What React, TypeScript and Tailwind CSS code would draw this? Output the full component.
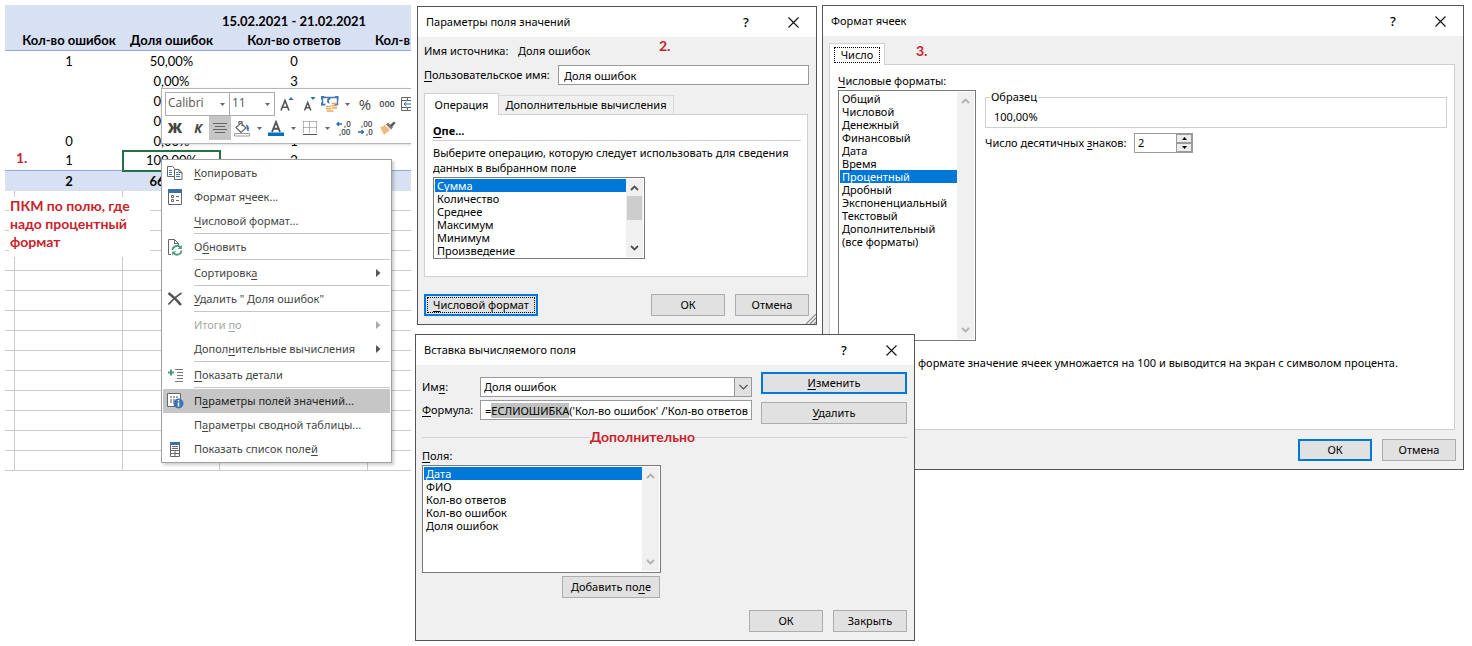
import { useEffect, useRef, type ReactNode } from "react";

const annotation = "font-[Lato,'Noto_Sans',sans-serif] text-[14px] font-bold text-[#c8232c]";

function Caption({ text, hot }: { text: string; hot: number }) {
  return (
    <>
      {text.slice(0, hot)}
      <span className="underline decoration-1 underline-offset-2">{text[hot]}</span>
      {text.slice(hot + 1)}
    </>
  );
}

/* ---------- Worksheet ---------- */

const rows: string[][] = [
  ["1", "50,00%", "0"],
  ["", "0,00%", "3"],
  ["", "0,00%", ""],
  ["", "0,00%", ""],
  ["0", "0,00%", "1"],
  ["1", "100,00%", "2"],
];

function Sheet() {
  return (
    <table className="w-full table-fixed border-separate border-spacing-0 text-center font-[Lato,'Noto_Sans',sans-serif] text-[13px] leading-[19px] text-black">
      <colgroup>
        <col className="w-[10px]" />
        <col className="w-[108px]" />
        <col className="w-[97px]" />
        <col className="w-[148px]" />
        <col />
      </colgroup>
      <thead className="bg-[#d8e0f4]">
        <tr className="h-[26px]">
          <th className="p-0" />
          <th className="p-0" />
          <th className="p-0" />
          <th className="whitespace-nowrap p-0 pt-[6px]">15.02.2021 - 21.02.2021</th>
          <th className="p-0" />
        </tr>
        <tr className="h-5 [&>th]:border-b [&>th]:border-[#8ea9db]">
          <th className="p-0" />
          <th className="whitespace-nowrap p-0">Кол-во ошибок</th>
          <th className="whitespace-nowrap p-0">Доля ошибок</th>
          <th className="whitespace-nowrap p-0">Кол-во ответов</th>
          <th className="overflow-hidden whitespace-nowrap p-0 pl-[7px] text-left">Кол-в</th>
        </tr>
      </thead>
      <tbody>
        {rows.map((r, i) => (
          <tr key={i} className={i === 5 ? "h-5 [&>td]:border-b [&>td]:border-[#8ea9db]" : "h-5"}>
            <td className="p-0" />
            <td className="p-0">{r[0]}</td>
            <td className={i === 5 ? "p-0 outline-2 -outline-offset-1 outline-[#217346]" : "p-0"}>{r[1]}</td>
            <td className="p-0">{r[2]}</td>
            <td className="p-0" />
          </tr>
        ))}
        <tr className="h-5 bg-[#d8e0f4] font-bold">
          <td className="p-0" />
          <td className="p-0">2</td>
          <td className="p-0">66,67%</td>
          <td className="p-0" />
          <td className="p-0" />
        </tr>
        {Array.from({ length: 14 }, (_, i) => (
          <tr key={i} className="h-5 [&>td]:border-b [&>td]:border-r [&>td]:border-[#c9ccc9] [&>td]:p-0 [&>td:last-child]:border-r-0">
            <td />
            <td />
            <td />
            <td />
            <td />
          </tr>
        ))}
      </tbody>
    </table>
  );
}

/* ---------- Mini toolbar ---------- */

function Drop() {
  return (
    <button aria-label="Ещё" className="flex h-6 w-3 items-center justify-center">
      <svg width="5" height="3" viewBox="0 0 5 3"><path d="M0 0h5L2.5 3z" fill="#666" /></svg>
    </button>
  );
}

function ToolSelect({ label, value, className }: { label: string; value: string; className: string }) {
  return (
    <div className={`relative h-6 border border-[#ababab] bg-white ${className}`}>
      <select aria-label={label} className="block h-5 w-full appearance-none bg-transparent pl-[2px] text-[12px] leading-5 text-[#555] outline-none">
        <option>{value}</option>
      </select>
      <svg className="pointer-events-none absolute right-1 top-[10px]" width="5" height="3" viewBox="0 0 5 3">
        <path d="M0 0h5L2.5 3z" fill="#666" />
      </svg>
    </div>
  );
}

function Tool({ label, className, children }: { label: string; className: string; children: ReactNode }) {
  return (
    <button aria-label={label} className={`flex h-6 shrink-0 items-center justify-center text-[#444] ${className}`}>
      {children}
    </button>
  );
}

function MiniToolbar() {
  return (
    <div className="absolute left-[156px] top-[83px] w-[300px] border border-[#b5b5b5] bg-white pb-[3px] pt-[3px] font-['Open_Sans','Noto_Sans',sans-serif] shadow-sm">
      <div className="flex pl-[3px]">
        <ToolSelect label="Шрифт" value="Calibri" className="w-[65px]" />
        <ToolSelect label="Размер шрифта" value="11" className="-ml-px w-[46px]" />
        <Tool label="Увеличить размер шрифта" className="w-6">
          <svg width="14" height="16" viewBox="0 0 14 16">
            <path d="M1 14.5 5 4.5l4 10M2.3 11.2h5.4" fill="none" stroke="#555" strokeWidth="1.6" />
            <path d="M8.500 4h5L11 1z" fill="#2b6cb0" />
          </svg>
        </Tool>
        <Tool label="Уменьшить размер шрифта" className="w-5">
          <svg width="13" height="16" viewBox="0 0 13 16">
            <path d="M1.500 14.500l3.200-8 3.200 8M2.600 11.800h4.300" fill="none" stroke="#555" strokeWidth="1.500" />
            <path d="M7.500 1h5L10 4z" fill="#2b6cb0" />
          </svg>
        </Tool>
        <Tool label="Финансовый числовой формат" className="w-[22px]">
          <svg width="18" height="16" viewBox="0 0 18 16">
            <path d="M1.500 1.500h15v7h-3M1.500 1.500v7h3" fill="none" stroke="#3f78b5" strokeWidth="1.400" />
            <path d="M0 0h4L0 4zM17.500 0h-4l4 4zM0 9.500V6l3.500 3.500z" fill="#3f78b5" />
            <path d="M9.500 2.500c-3 0-3.500 4-1 4" fill="none" stroke="#3f78b5" strokeWidth="1.800" />
            <path d="M10.500 7.500h5.500M10.500 9.700h5.500M10.500 12h5.500M5 10.500h5M5 12.700h5M6 15h6.500" stroke="#e9a860" strokeWidth="1.500" />
          </svg>
        </Tool>
        <Drop />
        <Tool label="Процентный формат" className="w-6"><span className="text-[15px] leading-5">%</span></Tool>
        <Tool label="Формат с разделителями" className="w-5"><span className="text-[9px] font-semibold leading-4">000</span></Tool>
        <Tool label="Объединить и поместить в центре" className="w-6">
          <svg width="18" height="16" viewBox="0 0 18 16" fill="none" stroke="#666">
            <path d="M1.500 1.500h16v13h-16zM1.500 4.500h16M1.500 11.500h16M7.500 1.500v3M7.500 11.500v3M13.500 1.500v3M13.500 11.500v3" />
            <path d="M4 8h10M6.500 5.800 4 8l2.500 2.200" stroke="#2b6cb0" />
          </svg>
        </Tool>
      </div>
      <div className="flex pl-px">
        <Tool label="Полужирный" className="w-6"><span className="text-[14px] font-extrabold leading-5">Ж</span></Tool>
        <Tool label="Курсив" className="w-[22px]"><span className="text-[13px] font-bold italic leading-5">К</span></Tool>
        <Tool label="По центру" className="w-[22px] bg-[#c6c6c6]">
          <svg width="16" height="14" viewBox="0 0 16 14" stroke="#666">
            <path d="M1 2.500h14M3 5.500h10M1 8.500h14M3 11.500h10" />
          </svg>
        </Tool>
        <Tool label="Цвет заливки" className="w-[22px]">
          <svg width="18" height="17" viewBox="0 0 18 17">
            <path d="M3 7.500 8 3l5 5-5 4.500zM6 5V1.500h3V6" fill="#fff" stroke="#666" strokeWidth="1.200" />
            <path d="M13 4.500c3 .5 3.500 4 2.500 7-1.500-1-2-2-2-4" fill="#3f78b5" />
            <path d="M1.500 13.500h15v2.500h-15z" fill="#fff" stroke="#999" />
          </svg>
        </Tool>
        <Drop />
        <Tool label="Цвет текста" className="w-[22px]">
          <svg width="16" height="17" viewBox="0 0 16 17">
            <path d="M4 12 8 2l4 10M5.300 8.800h5.400" fill="none" stroke="#555" strokeWidth="1.900" />
            <path d="M0 12.500h16v3.500H0z" fill="#0070c0" />
          </svg>
        </Tool>
        <Drop />
        <Tool label="Границы" className="w-[22px]">
          <svg width="14" height="14" viewBox="0 0 14 14" fill="none" stroke="#777">
            <path d="M.5.5h13M.5 6.500h13M.5.5v12M6.500.5v12M13.500.5v12" strokeDasharray="1 1" />
            <path d="M0 13.500h14" stroke="#555" />
          </svg>
        </Tool>
        <Drop />
        <Tool label="Увеличить разрядность" className="w-[22px]">
          <svg width="18" height="18" viewBox="0 0 18 18" fill="#444" fontSize="8" fontFamily="Open Sans, sans-serif" fontWeight="600">
            <path d="M2 5h5M4 3 2 5l2 2" fill="none" stroke="#2b6cb0" strokeWidth="1.300" />
            <text x="9" y="8">,0</text>
            <text x="4" y="16">,00</text>
          </svg>
        </Tool>
        <Tool label="Уменьшить разрядность" className="w-[22px]">
          <svg width="18" height="18" viewBox="0 0 18 18" fill="#444" fontSize="8" fontFamily="Open Sans, sans-serif" fontWeight="600">
            <text x="4" y="8">,00</text>
            <path d="M1 13h5.500M4.500 11l2 2-2 2" fill="none" stroke="#2b6cb0" strokeWidth="1.300" />
            <text x="9" y="16">,0</text>
          </svg>
        </Tool>
        <Tool label="Формат по образцу" className="w-[22px]">
          <svg width="18" height="16" viewBox="0 0 18 16">
            <path d="M1 7c2 0 3-1 5-2l5 5c-2 2-4 3-6 5z" fill="#eebb7d" />
            <path d="m7 4.500 5 5 2-2-5-5z" fill="#777" />
            <path d="m11 5 4-3.500 1.500 1.500L13 7z" fill="#555" />
          </svg>
        </Tool>
      </div>
    </div>
  );
}

/* ---------- Context menu ---------- */

const menuIcons: Record<string, ReactNode> = {
  copy: (
    <svg width="16" height="16" viewBox="0 0 16 16" fill="#fff" stroke="#666">
      <path d="M.5 1.500h5l2 2v8h-7z" />
      <path d="M2 5.500h3M2 7.500h3M2 9.500h3" stroke="#3f78b5" />
      <path d="M7.500 4.500h4.500l3 3v7h-7.500z" />
      <path d="M12 4.500v3h3" fill="none" />
      <path d="M9 9.500h4M9 11.500h4M9 7.500h2" stroke="#3f78b5" />
    </svg>
  ),
  format: (
    <svg width="14" height="16" viewBox="0 0 14 16" fill="none" stroke="#666">
      <path d="M.5.5h13v15H.5z" fill="#fff" />
      <path d="M0 2h14" stroke="#3d6ea5" strokeWidth="4" />
      <path d="M3.500 6.500h2v2h-2zM3.500 10.500h2v2h-2zM8 7.500h3M8 11.500h3" />
    </svg>
  ),
  refresh: (
    <svg width="16" height="17" viewBox="0 0 16 17" fill="none">
      <path d="M4 15.500H1.500V.5h6l4 4V6" stroke="#666" />
      <path d="M7.500.5v4h4" stroke="#666" />
      <path d="M5.500 11a4.500 4.500 0 0 1 8-2.500M14.500 11.500a4.500 4.500 0 0 1-8 2.500" stroke="#4d9a7c" strokeWidth="1.800" />
      <path d="M14.800 6v4h-4zM5.200 16.500v-4h4z" fill="#4d9a7c" />
    </svg>
  ),
  remove: (
    <svg width="16" height="14" viewBox="0 0 16 14" fill="none" stroke="#555">
      <path d="M1.500 1C6 4.500 10 8 14 13" strokeWidth="2.600" />
      <path d="M14.500 1C9.500 4 5 8 1.500 12.500" strokeWidth="1.700" />
    </svg>
  ),
  details: (
    <svg width="15" height="15" viewBox="0 0 15 15" fill="none">
      <path d="M0 4.500h6M3 1.500v6" stroke="#4d9a7c" strokeWidth="2" />
      <path d="M7 1.500h8M9 4.500h6M9 7.500h6M9 10.500h6M7 13.500h8" stroke="#777" />
    </svg>
  ),
  value: (
    <svg width="17" height="16" viewBox="0 0 17 16" fill="none">
      <path d="M.5.5h13v13H.5z" fill="#fff" stroke="#666" />
      <path d="M3 3h2v2H3zM6 3h2v2H6zM9 3h2v2H9zM3 6h2v4H3zM6 6h2v4H6z" fill="#aaa" />
      <circle cx="11.500" cy="10.500" r="5" fill="#3a75b5" />
      <path d="M11.500 7v1.500M11.500 9.500v4" stroke="#fff" strokeWidth="1.500" />
    </svg>
  ),
  list: (
    <svg width="10" height="15" viewBox="0 0 10 15" fill="none" stroke="#666">
      <path d="M.5.5h9v14h-9z" fill="#fff" />
      <path d="M0 1.500h10" stroke="#3d6ea5" strokeWidth="3" />
      <path d="M2 4.500h6M2 6.500h6M.5 8.500h9M.5 11.500h9M5 8.500v6" />
    </svg>
  ),
};

type Entry = { text: string; hot: number; icon?: string; sub?: boolean; off?: boolean; active?: boolean };

const menu: Entry[][] = [
  [
    { text: "Копировать", hot: 0, icon: "copy" },
    { text: "Формат ячеек...", hot: 8, icon: "format" },
    { text: "Числовой формат...", hot: 0 },
  ],
  [{ text: "Обновить", hot: 1, icon: "refresh" }],
  [{ text: "Сортировка", hot: 9, sub: true }],
  [{ text: 'Удалить " Доля ошибок"', hot: 0, icon: "remove" }],
  [
    { text: "Итоги по", hot: 6, sub: true, off: true },
    { text: "Дополнительные вычисления", hot: 5, sub: true },
  ],
  [{ text: "Показать детали", hot: 0, icon: "details" }],
  [
    { text: "Параметры полей значений...", hot: 1, icon: "value", active: true },
    { text: "Параметры сводной таблицы...", hot: 1 },
    { text: "Показать список полей", hot: 20, icon: "list" },
  ],
];

function ContextMenu() {
  return (
    <div
      role="menu"
      className="absolute left-[156px] top-[154px] w-[231px] border border-[#a0a0a0] bg-white p-px font-['Noto_Sans',sans-serif] text-[11px] text-[#444] shadow-[2px_2px_3px_rgba(0,0,0,0.2)]"
    >
      {menu.map((group, g) => (
        <div key={g}>
          {g > 0 && <div className="mb-px ml-[31px] h-px bg-[#c6c6c6]" />}
          {group.map((e) => (
            <button
              key={e.text}
              role="menuitem"
              disabled={e.off}
              className={`flex h-6 w-full items-center text-left ${e.active ? "bg-[#c6c6c6] text-[#222]" : ""} ${e.off ? "text-[#a6a6a6]" : ""}`}
            >
              <span className="flex w-6 shrink-0 justify-center">{e.icon && menuIcons[e.icon]}</span>
              <span className="ml-[7px] grow whitespace-nowrap"><Caption text={e.text} hot={e.hot} /></span>
              {e.sub && (
                <svg className="mr-[9px]" width="5" height="8" viewBox="0 0 5 8">
                  <path d="M0 0v8l4.500-4z" fill={e.off ? "#aaa" : "#555"} />
                </svg>
              )}
            </button>
          ))}
        </div>
      ))}
    </div>
  );
}

/* ---------- Dialog parts ---------- */

function Dialog({ title, className, children }: { title: string; className: string; children: ReactNode }) {
  return (
    <section role="dialog" aria-label={title} className={`absolute border border-[#555] bg-[#f0f0f0] font-['Noto_Sans',sans-serif] text-[11px] leading-4 text-black ${className}`}>
      <header className="flex h-[30px] items-center bg-white pl-2">
        <h2 className="grow">{title}</h2>
        <button aria-label="Справка" className="w-12 text-[13px] font-medium">?</button>
        <button aria-label="Закрыть окно" className="flex w-[46px] justify-center">
          <svg width="11" height="11" viewBox="0 0 11 11" stroke="#111" strokeWidth="1.100"><path d="M.5.5l10 10M10.500.5l-10 10" /></svg>
        </button>
      </header>
      {children}
    </section>
  );
}

function Btn({ className = "w-[74px]", primary, children }: { className?: string; primary?: boolean; children: ReactNode }) {
  return (
    <button className={`flex h-[22px] items-center justify-center whitespace-nowrap bg-[#e1e1e1] ${primary ? "border-2 border-[#0078d7]" : "border border-[#adadad]"} ${className}`}>
      {children}
    </button>
  );
}

function Chevron({ up, dim }: { up?: boolean; dim?: boolean }) {
  return (
    <svg width="9" height="6" viewBox="0 0 9 6" fill="none" stroke={dim ? "#b0b0b0" : "#505050"} strokeWidth="1.800">
      <path d={up ? "M1 5l3.500-3.500L8 5" : "M1 1l3.500 3.500L8 1"} />
    </svg>
  );
}

function ListBox({ label, items, selected, className, thumb }: { label: string; items: string[]; selected: number; className: string; thumb?: boolean }) {
  return (
    <div className={`flex border border-[#7a7a7a] bg-white p-px leading-[13px] ${className}`}>
      <ul role="listbox" aria-label={label} className="grow">
        {items.map((t, i) => (
          <li key={t} role="option" aria-selected={i === selected} className={`h-[13px] whitespace-nowrap pl-[2px] ${i === selected ? "bg-[#0078d7] text-white" : ""}`}>
            {t}
          </li>
        ))}
      </ul>
      <div className="flex w-[17px] flex-col items-center justify-between bg-[#f0f0f0] py-[6px]">
        <Chevron up dim={!thumb} />
        {thumb && <div className="mt-[5px] h-6 w-[15px] bg-[#cdcdcd]" />}
        {thumb && <div className="grow" />}
        <Chevron dim={!thumb} />
      </div>
    </div>
  );
}

const fieldBox = "h-5 border border-[#9a9a9a] bg-white outline-none";

/* ---------- Dialogs ---------- */

function ValueFieldDialog() {
  return (
    <Dialog title="Параметры поля значений" className="left-[417px] top-[6px] w-[400px]">
      <span className={`absolute left-[241px] top-[31px] ${annotation}`}>2.</span>
      <div className="pb-2 pl-[6px] pr-[7px]">
        <div className="flex h-7 items-center">
          <span className="w-[94px]">Имя источника:</span>
          <span>Доля ошибок</span>
        </div>
        <div className="flex items-center">
          <label htmlFor="custom-name" className="w-[134px] shrink-0"><Caption text="Пользовательское имя:" hot={0} /></label>
          <input id="custom-name" defaultValue="Доля ошибок" className={`min-w-0 grow px-[5px] ${fieldBox}`} />
        </div>
        <div role="tablist" className="mt-2 flex h-[21px] items-end">
          <button role="tab" aria-selected="true" className="z-10 -mb-px h-[22px] w-[75px] border border-b-0 border-[#ccd3cc] bg-white">Операция</button>
          <button role="tab" aria-selected="false" className="h-[19px] w-[175px] border border-b-0 border-l-0 border-[#d9d9d9]">Дополнительные вычисления</button>
        </div>
        <div role="tabpanel" className="mr-px border border-[#ccd3cc] bg-white pb-[17px] pl-2 pr-[6px] pt-2">
          <h3 className="h-[18px] border-b border-[#ccd3cc] font-bold"><Caption text="Опе..." hot={0} /></h3>
          <p className="mt-1 leading-[15px]">Выберите операцию, которую следует использовать для сведения<br />данных в выбранном поле</p>
          <ListBox
            label="Операция"
            items={["Сумма", "Количество", "Среднее", "Максимум", "Минимум", "Произведение"]}
            selected={0}
            thumb
            className="mt-[2px] w-[212px]"
          />
        </div>
        <div className="mt-[17px] flex gap-[10px]">
          <Btn primary className="w-[114px]">
            <span className="flex h-4 w-[108px] items-center justify-center border border-dotted border-black"><span><Caption text="Числовой формат" hot={0} /></span></span>
          </Btn>
          <div className="grow" />
          <Btn>ОК</Btn>
          <Btn>Отмена</Btn>
        </div>
      </div>
      <svg className="absolute bottom-0 right-0" width="10" height="10" viewBox="0 0 10 10" stroke="#888" strokeWidth="1.200"><path d="M0 10 10 0M4 10l6-6M8 10l2-2" /></svg>
    </Dialog>
  );
}

function FormatCellsDialog() {
  return (
    <Dialog title="Формат ячеек" className="left-[822px] right-2 top-[5px]">
      <span className={`absolute left-[93px] top-[37px] ${annotation}`}>3.</span>
      <div className="pb-2 pl-[6px] pr-[7px] pt-[7px]">
        <div role="tablist" className="flex">
          <button role="tab" aria-selected="true" className="z-10 -mb-px flex h-[22px] w-14 items-center justify-center border border-b-0 border-[#ccd3cc] bg-white">
            <span className="flex h-4 w-[46px] items-center justify-center border border-dotted border-black">Число</span>
          </button>
        </div>
        <div role="tabpanel" className="mr-px border border-[#ccd3cc] bg-white pb-[58px] pl-2 pr-[7px] pt-2">
          <div className="flex gap-[9px]">
            <div className="w-[138px] shrink-0">
              <span className="block"><Caption text="Числовые форматы:" hot={0} /></span>
              <ListBox
                label="Числовые форматы"
                items={["Общий", "Числовой", "Денежный", "Финансовый", "Дата", "Время", "Процентный", "Дробный", "Экспоненциальный", "Текстовый", "Дополнительный", "(все форматы)"]}
                selected={6}
                className="mt-px h-[251px]"
              />
            </div>
            <div className="min-w-0 grow pt-4">
              <fieldset className="h-[39px] border border-[#ccd3cc] pl-2">
                <legend className="-ml-1 px-px">Образец</legend>
                <output className="mt-1 block">100,00%</output>
              </fieldset>
              <div className="mt-[5px] flex items-center gap-[9px]">
                <label htmlFor="decimals" className="w-[140px] whitespace-nowrap"><Caption text="Число десятичных знаков:" hot={17} /></label>
                <div className={`flex w-[59px] ${fieldBox}`}>
                  <input id="decimals" type="number" defaultValue={2} className="w-10 min-w-0 grow pl-[3px] outline-none [appearance:textfield] [&::-webkit-inner-spin-button]:hidden" />
                  <div className="flex w-4 shrink-0 flex-col">
                    <button aria-label="Больше" className="flex h-[9px] items-center justify-center border border-[#9a9a9a] bg-[#ececec]">
                      <svg width="5" height="3" viewBox="0 0 5 3"><path d="M0 3h5L2.500 0z" /></svg>
                    </button>
                    <button aria-label="Меньше" className="flex h-[9px] items-center justify-center border border-[#9a9a9a] bg-[#ececec]">
                      <svg width="5" height="3" viewBox="0 0 5 3"><path d="M0 0h5L2.500 3z" /></svg>
                    </button>
                  </div>
                </div>
              </div>
            </div>
          </div>
          <p className="mt-[14px] whitespace-nowrap pl-20">формате значение ячеек умножается на 100 и выводится на экран с символом процента.</p>
        </div>
        <div className="mt-[9px] flex justify-end gap-[10px]">
          <Btn primary>ОК</Btn>
          <Btn>Отмена</Btn>
        </div>
      </div>
    </Dialog>
  );
}

function CalculatedFieldDialog() {
  const formula = useRef<HTMLInputElement>(null);
  useEffect(() => {
    formula.current?.focus();
    formula.current?.setSelectionRange(1, 11);
  }, []);
  return (
    <Dialog title="Вставка вычисляемого поля" className="left-[415px] top-[334px] w-[500px]">
      <div className="pb-2 pl-[6px] pr-[7px] pt-[7px]">
        <div className="flex gap-[9px]">
          <div className="flex min-w-0 grow flex-col gap-[3px] pt-[5px]">
            <div className="flex items-center">
              <label htmlFor="field-name" className="w-[58px] shrink-0"><Caption text="Имя:" hot={2} /></label>
              <div className={`relative grow ${fieldBox}`}>
                <select id="field-name" className="h-full w-full appearance-none bg-transparent pl-[3px] outline-none">
                  <option>Доля ошибок</option>
                </select>
                <span className="pointer-events-none absolute -inset-y-px -right-px flex w-[18px] items-center justify-center border border-[#9a9a9a] bg-[#e1e1e1]">
                  <svg width="9" height="6" viewBox="0 0 9 6" fill="none" stroke="#505050" strokeWidth="1.200"><path d="M.5 1l4 4 4-4" /></svg>
                </span>
              </div>
            </div>
            <div className="flex items-center">
              <label htmlFor="formula" className="w-[58px] shrink-0"><Caption text="Формула:" hot={0} /></label>
              <input
                id="formula"
                ref={formula}
                defaultValue="=ЕСЛИОШИБКА('Кол-во ошибок' /'Кол-во ответов"
                className={`min-w-0 grow pl-1 selection:bg-[#bfc2bf] selection:text-black ${fieldBox}`}
              />
            </div>
          </div>
          <div className="flex flex-col gap-2">
            <Btn primary className="w-[146px]"><span><Caption text="Изменить" hot={0} /></span></Btn>
            <Btn className="w-[146px]"><span><Caption text="Удалить" hot={0} /></span></Btn>
          </div>
        </div>
        <div className="mt-[5px] flex h-4 items-center">
          <div className="h-px w-[168px] bg-[#d5d5d5]" />
          <span className={annotation}>Дополнительно</span>
          <div className="h-px grow bg-[#d5d5d5]" />
        </div>
        <div className="mt-[3px] w-[239px]">
          <span className="block"><Caption text="Поля:" hot={0} /></span>
          <ListBox
            label="Поля"
            items={["Дата", "ФИО", "Кол-во ответов", "Кол-во ошибок", "Доля ошибок"]}
            selected={0}
            className="mt-px h-[108px]"
          />
          <Btn className="ml-auto mr-px mt-[3px] w-[98px]"><span><Caption text="Добавить поле" hot={11} /></span></Btn>
        </div>
        <div className="mt-3 flex justify-end gap-[10px]">
          <Btn>ОК</Btn>
          <Btn>Закрыть</Btn>
        </div>
      </div>
    </Dialog>
  );
}

export default function App() {
  return (
    <main className="relative min-h-screen overflow-hidden bg-white pl-[5px] pt-[5px]">
      <div className="relative w-[406px] overflow-hidden pb-[2px]">
        <Sheet />
        <span className={`absolute left-[11px] top-[142px] ${annotation}`}>1.</span>
        <p className={`absolute left-1 top-[192px] h-[60px] w-[141px] whitespace-nowrap bg-white pl-px leading-[18px] ${annotation}`}>
          ПКМ по полю, где<br />надо процентный<br />формат
        </p>
        <MiniToolbar />
        <ContextMenu />
      </div>
      <FormatCellsDialog />
      <ValueFieldDialog />
      <CalculatedFieldDialog />
    </main>
  );
}
